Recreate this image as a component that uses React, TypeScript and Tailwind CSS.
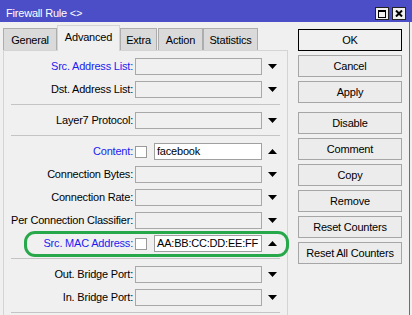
import React from 'react'

type Row = { label: string; blue?: boolean; value?: string; check?: boolean; up?: boolean }

const groups: Row[][] = [
  [{ label: 'Src. Address List:', blue: true }, { label: 'Dst. Address List:' }],
  [{ label: 'Layer7 Protocol:' }],
  [
    { label: 'Content:', blue: true, check: true, value: 'facebook', up: true },
    { label: 'Connection Bytes:' },
    { label: 'Connection Rate:' },
    { label: 'Per Connection Classifier:' },
    { label: 'Src. MAC Address:', blue: true, check: true, value: 'AA:BB:CC:DD:EE:FF', up: true },
  ],
  [{ label: 'Out. Bridge Port:' }, { label: 'In. Bridge Port:' }],
]

const tabs = ['General', 'Advanced', 'Extra', 'Action', 'Statistics']
const tabWidths = ['w-[54px]', 'w-[63px]', 'w-[37px]', 'w-[45px]', 'w-[55px]']

const buttons = ['OK', 'Cancel', 'Apply', 'Disable', 'Comment', 'Copy', 'Remove', 'Reset Counters', 'Reset All Counters']

function Arrow({ up }: { up?: boolean }) {
  return (
    <svg width="9" height="5" viewBox="0 0 9 5" className="ml-[6px]">
      {up ? <polygon points="4.5,0 9,5 0,5" fill="#000" /> : <polygon points="0,0 9,0 4.5,5" fill="#000" />}
    </svg>
  )
}

function FieldRow({ row }: { row: Row }) {
  return (
    <div className="flex items-center h-[23px]">
      <div className={`w-[129px] text-right whitespace-nowrap ${row.blue ? 'text-[#1c1cf0]' : 'text-black'}`}>
        {row.label}
      </div>
      <div className="ml-[2px] w-[127px] flex items-center">
        {row.check ? (
          <>
            <div className="w-[12px] h-[12px] bg-white border border-[#9a9a9a]" />
            <div className="ml-[7px] w-[108px] h-[17px] bg-white border border-[#a0a0a0] px-[2px] leading-[15px] text-black">
              {row.value}
            </div>
          </>
        ) : (
          <div className="w-[127px] h-[17px] bg-[#f0f0f0] border border-[#a8a8a8]" />
        )}
      </div>
      <Arrow up={row.up} />
    </div>
  )
}

export default function App() {
  return (
    <div className="w-[412px] h-[315px] overflow-hidden bg-[#f0f0f0] text-[11px] tracking-[-0.2px] font-['Liberation_Sans',Arial,sans-serif]">
      {/* Title bar */}
      <div className="h-[22px] bg-[#4b4ec6] flex justify-between pl-[6px] pr-[6px]">
        <span className="text-white leading-none pt-[8px]">Firewall Rule &lt;&gt;</span>
        <div className="flex gap-[3px] pt-[7px]">
          <div className="w-[14px] h-[13px] bg-[#f0f0f0] border border-[#222] flex items-center justify-center">
            <svg width="8" height="8" viewBox="0 0 8 8">
              <rect x="0.5" y="0.5" width="7" height="7" fill="none" stroke="#000" />
              <rect x="0" y="0" width="8" height="2" fill="#000" />
            </svg>
          </div>
          <div className="w-[14px] h-[13px] bg-[#f0f0f0] border border-[#222] flex items-center justify-center">
            <svg width="8" height="7" viewBox="0 0 8 7">
              <path d="M1 0.5 L7 6.5 M7 0.5 L1 6.5" stroke="#000" strokeWidth="2" />
            </svg>
          </div>
        </div>
      </div>

      <div className="flex h-[293px]">
        {/* Left: tabs + panel */}
        <div className="pl-[3px] pt-[3px] w-[288px]">
          <div className="flex items-end h-[25px] relative z-10">
            {tabs.map((t, i) =>
              i === 1 ? (
                <div
                  key={t}
                  className={`${tabWidths[i]} h-[26px] -mb-px bg-[#f0f0f0] border border-b-0 border-[#d4d4d4] flex justify-center pt-[6px] leading-none text-black`}
                >
                  {t}
                </div>
              ) : (
                <div
                  key={t}
                  className={`${tabWidths[i]} ${i === 3 ? 'ml-px' : ''} h-[22px] bg-[#dadada] border border-b-0 border-[#adadad] flex justify-center pt-[6px] leading-none text-black`}
                >
                  {t}
                </div>
              )
            )}
          </div>
          <div className="relative w-[285px] h-[270px] border border-[#d4d4d4] pt-[4px]">
            {groups.map((g, gi) => (
              <div key={gi}>
                {gi > 0 && <div className="ml-[7px] w-[269px] h-px bg-[#c4c4c4] mt-[3px] mb-[4px]" />}
                {g.map((r) => (
                  <FieldRow key={r.label} row={r} />
                ))}
              </div>
            ))}
            <div className="ml-[7px] w-[269px] h-px bg-[#c4c4c4] mt-[3px]" />
            {/* highlight */}
            <div className="absolute left-[20px] top-[180px] w-[265px] h-[26px] border-[3px] border-[#27a84a] rounded-[11px]" />
          </div>
        </div>

        {/* Right: buttons */}
        <div className="ml-[10px] pt-[7px] w-[104px] flex flex-col">
          {buttons.map((b, i) => (
            <div
              key={b}
              className={`h-[22px] flex items-center justify-center text-black whitespace-nowrap ${
                i === 0 ? 'border border-black bg-[#f0f0f0]' : 'border border-[#a6a6a6] bg-[#ececec]'
              } ${i === 0 ? '' : i === 3 ? 'mt-[9px]' : 'mt-[4px]'}`}
            >
              {b}
            </div>
          ))}
        </div>
        <div className="ml-[7px] w-px bg-[#6e6e6e]" />
      </div>
    </div>
  )
}
